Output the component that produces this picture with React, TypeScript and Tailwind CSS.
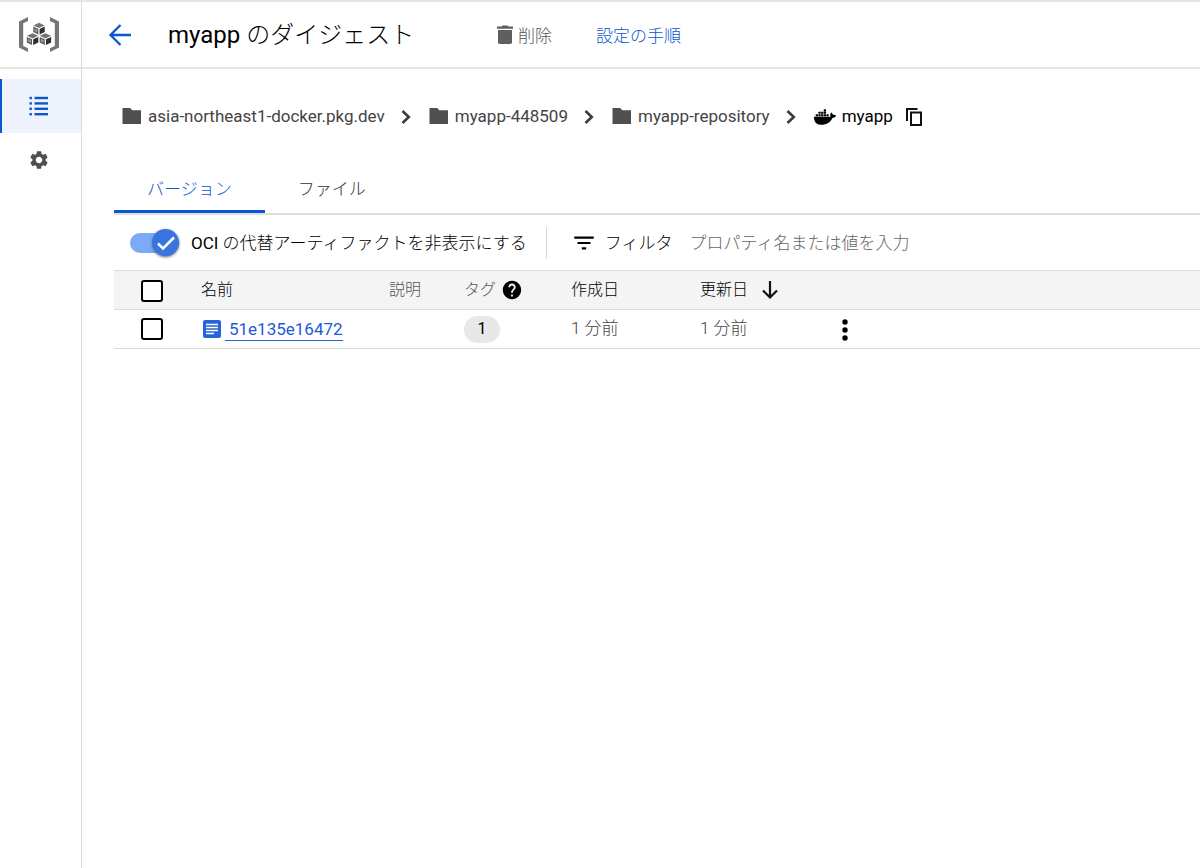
import { useState } from "react";
import type { ReactNode } from "react";
import { FaDocker } from "react-icons/fa";
import { MdFilterList, MdHelp, MdSettings } from "react-icons/md";

interface Version {
  digest: string;
  tags: number;
  created: string;
  updated: string;
}

const versions: Version[] = [
  { digest: "51e135e16472", tags: 1, created: "1 分前", updated: "1 分前" },
];

const parents = ["asia-northeast1-docker.pkg.dev", "myapp-448509", "myapp-repository"];

function Cube({ x, y }: { x: number; y: number }) {
  return (
    <g transform={`translate(${x} ${y})`}>
      <path d="M0 -5.8 5.6 -3.2 0 -.6 -5.6 -3.2Z" fill="#757575" />
      <path d="M-5.7 -2.1 -.6 .3V6L-5.7 3.4Z" fill="#5a5a5a" />
      <path d="M5.700 -2.100 .6 .3V6L5.700 3.400Z" fill="#2f2f2f" />
      <path d="M-4.600 -.2 -1.800 1.100V3.800L-4.600 2.400Z" fill="#9a9a9a" />
    </g>
  );
}

function RegistryLogo() {
  return (
    <svg width="42" height="36" viewBox="0 0 42 36" aria-hidden="true">
      <path d="M10 0V4L5.200 6.300V28.900L10 31.200V35L1 30.600V4.400Z" fill="#757575" />
      <path d="M32 0V4L36.800 6.300V28.900L32 31.200V35L41 30.600V4.400Z" fill="#757575" />
      <Cube x={21} y={11.6} />
      <Cube x={14.6} y={22} />
      <Cube x={27.4} y={22} />
    </svg>
  );
}

function BackIcon() {
  return (
    <svg width="24" height="24" viewBox="0 0 24 24" fill="none" stroke="#0b57d0" strokeWidth="2.300" aria-hidden="true">
      <path d="M23 12H3M12.500 2 2.500 12 12.500 22" />
    </svg>
  );
}

function ListIcon() {
  return (
    <svg width="20" height="20" viewBox="0 0 20 20" fill="#0b57d0" aria-hidden="true">
      {[0, 5.4, 10.8, 16.2].map((y) => (
        <g key={y}>
          <rect x="0.500" y={y + 0.8} width="2.400" height="2.400" />
          <rect x="5.500" y={y + 0.8} width="13.500" height="2.400" />
        </g>
      ))}
    </svg>
  );
}

function FolderIcon() {
  return (
    <svg width="20" height="20" viewBox="0 0 20 20" aria-hidden="true">
      <path d="M.5 1H8.200L10.200 3.200H19V17H.500Z" fill="#4f4f4f" />
    </svg>
  );
}

function ChevronIcon() {
  return (
    <svg width="10" height="14" viewBox="0 0 10 14" fill="none" stroke="#3c3c3c" strokeWidth="2.600" aria-hidden="true">
      <path d="M1.500 1 7.800 7 1.500 13" />
    </svg>
  );
}

function TrashIcon() {
  return (
    <svg width="18" height="20" viewBox="0 0 18 20" fill="#5f5f5f" aria-hidden="true">
      <path d="M1 1.500H5.500L6.500 .5H11.500L12.500 1.500H17V3.700H1Z" />
      <path d="M2 5H16V17.200A1.800 1.800 0 0 1 14.200 19H3.800A1.800 1.800 0 0 1 2 17.200Z" />
    </svg>
  );
}

function CopyIcon() {
  return (
    <svg width="18" height="20" viewBox="0 0 18 20" fill="none" stroke="#111" strokeWidth="2" aria-hidden="true">
      <path d="M2 14V2H12.500" />
      <path d="M6 5.500H16V18H6Z" />
    </svg>
  );
}

function DocumentIcon() {
  return (
    <svg width="20" height="20" viewBox="0 0 20 20" aria-hidden="true">
      <rect x="1" y="1" width="18" height="18" rx="2" fill="#2463d8" />
      <path d="M4 5.500H16M4 8.500H16M4 11.500H16M4 14.500H12" stroke="#fff" strokeWidth="1.500" />
    </svg>
  );
}

function SortIcon() {
  return (
    <svg width="18" height="20" viewBox="0 0 18 20" fill="none" stroke="#111" strokeWidth="2.200" aria-hidden="true">
      <path d="M9 1V17.500M2 10.500 9 17.500 16 10.500" />
    </svg>
  );
}

function MoreIcon() {
  return (
    <svg width="8" height="24" viewBox="0 0 8 24" fill="#000" aria-hidden="true">
      <circle cx="4" cy="4" r="2.700" />
      <circle cx="4" cy="12" r="2.700" />
      <circle cx="4" cy="20" r="2.700" />
    </svg>
  );
}

function Checkbox({ label, checked, onChange }: { label: string; checked: boolean; onChange: () => void }) {
  return (
    <input
      type="checkbox"
      aria-label={label}
      checked={checked}
      onChange={onChange}
      className="block size-[22px] appearance-none rounded-[3px] border-2 border-black bg-white checked:bg-[#2463d8]"
    />
  );
}

function Tab({ active, onClick, children }: { active: boolean; onClick: () => void; children: ReactNode }) {
  return (
    <button
      role="tab"
      aria-selected={active}
      onClick={onClick}
      className={`h-12 border-b-[3px] px-[33px] pt-1 text-[17px] font-light ${
        active ? "border-[#0b57d0] text-[#0b57d0]" : "border-transparent text-[#333]"
      }`}
    >
      {children}
    </button>
  );
}

export default function App() {
  const [tab, setTab] = useState("versions");
  const [hideOci, setHideOci] = useState(true);
  const [filter, setFilter] = useState("");
  const [selected, setSelected] = useState<string[]>([]);

  const toggle = (digest: string) =>
    setSelected(selected.includes(digest) ? selected.filter((d) => d !== digest) : [...selected, digest]);

  const allSelected = selected.length === versions.length;

  return (
    <div className="flex min-h-screen border-t-2 border-[#e6e6e6] bg-white font-[Roboto,'Noto_Sans_CJK_JP',sans-serif] text-[17px] text-black">
      {/* Side navigation */}
      <nav className="w-[82px] shrink-0 border-r border-[#dadada]">
        <div className="flex h-[67px] items-center border-b-2 border-[#e6e6e6] pl-[18px]">
          <RegistryLogo />
        </div>
        <a
          href="#repositories"
          aria-label="リポジトリ"
          className="mt-2.5 flex h-[54px] items-center border-l-2 border-[#0b57d0] bg-[#eef3fd] pl-[27px]"
        >
          <ListIcon />
        </a>
        <a href="#settings" aria-label="設定" className="flex h-[54px] items-center pl-7 text-[#4f4f4f]">
          <MdSettings size={22} />
        </a>
      </nav>

      <div className="min-w-0 flex-1">
        {/* Page header */}
        <header className="flex h-[67px] items-center border-b-2 border-[#e6e6e6] pl-[26px]">
          <button aria-label="戻る">
            <BackIcon />
          </button>
          <h1 className="ml-9 w-[328px] text-2xl">
            myapp <span className="font-light">のダイジェスト</span>
          </h1>
          <button className="flex items-center gap-1 font-light text-[#555]">
            <TrashIcon />
            <span className="pt-1">削除</span>
          </button>
          <a href="#setup" className="ml-11 pt-1 font-light text-[#0b57d0]">
            設定の手順
          </a>
        </header>

        <main className="pl-8">
          {/* Breadcrumb */}
          <div className="flex h-24 items-center pl-2">
            {parents.map((name) => (
              <div key={name} className="flex items-center">
                <a href={`#${name}`} className="flex items-center gap-1.5 text-[#444]">
                  <FolderIcon />
                  {name}
                </a>
                <span className="mr-[18px] ml-4">
                  <ChevronIcon />
                </span>
              </div>
            ))}
            <span className="flex items-center gap-1.5">
              <FaDocker size={22} />
              myapp
            </span>
            <button aria-label="コピー" className="ml-3">
              <CopyIcon />
            </button>
          </div>

          {/* Tabs */}
          <div role="tablist" className="flex border-b-2 border-[#dedede]">
            <Tab active={tab === "versions"} onClick={() => setTab("versions")}>
              バージョン
            </Tab>
            <Tab active={tab === "files"} onClick={() => setTab("files")}>
              ファイル
            </Tab>
          </div>

          {/* Toolbar */}
          <div className="flex h-[55px] items-center pl-4">
            <label className="flex items-center gap-3">
              <input
                type="checkbox"
                checked={hideOci}
                onChange={(e) => setHideOci(e.target.checked)}
                className="peer sr-only"
              />
              <span className="flex h-5 w-[49px] items-center justify-start rounded-full bg-gray-300 peer-checked:justify-end peer-checked:bg-[#7baaf7]">
                <span className="flex size-[27px] shrink-0 items-center justify-center rounded-full bg-[#3974e0] shadow-sm shadow-gray-500">
                  <svg width="20" height="18" viewBox="0 0 20 18" fill="none" stroke="#fff" strokeWidth="2.600" aria-hidden="true">
                    <path d="M2 9.500 7 14.500 18 3.500" />
                  </svg>
                </span>
              </span>
              <span className="pt-0.5">
                OCI <span className="font-light">の代替アーティファクトを非表示にする</span>
              </span>
            </label>
            <div className="ml-[19px] h-8 w-px bg-[#d4d4d4]" />
            <label htmlFor="filter" className="ml-6 flex items-center gap-2 font-light">
              <MdFilterList size={26} />
              <span className="pt-0.5">フィルタ</span>
            </label>
            <input
              id="filter"
              type="text"
              value={filter}
              onChange={(e) => setFilter(e.target.value)}
              placeholder="プロパティ名または値を入力"
              className="ml-[17px] min-w-0 flex-1 pt-0.5 font-light outline-none placeholder:text-[#666]"
            />
          </div>

          {/* Versions */}
          <table className="w-full table-fixed text-left">
            <colgroup>
              <col className="w-[87px]" />
              <col className="w-[188px]" />
              <col className="w-[75px]" />
              <col className="w-[107px]" />
              <col className="w-[129px]" />
              <col className="w-[139px]" />
              <col />
            </colgroup>
            <thead className="text-base">
              <tr className="h-[39px] border-y border-[#dcdcdc] bg-[#f4f4f4]">
                <th className="pt-0.5 pl-[27px]">
                  <Checkbox
                    label="すべて選択"
                    checked={allSelected}
                    onChange={() => setSelected(allSelected ? [] : versions.map((v) => v.digest))}
                  />
                </th>
                <th className="font-light">名前</th>
                <th className="font-light text-[#555]">説明</th>
                <th className="font-light text-[#555]">
                  <span className="flex items-center gap-[5px]">
                    タグ
                    <MdHelp size={22} className="text-black" />
                  </span>
                </th>
                <th className="font-light">作成日</th>
                <th className="font-light">
                  <button className="flex items-center gap-[13px]">
                    更新日
                    <SortIcon />
                  </button>
                </th>
                <th />
              </tr>
            </thead>
            <tbody>
              {versions.map((version) => (
                <tr key={version.digest} className="h-[39px] border-b border-[#dcdcdc]">
                  <td className="pl-[27px]">
                    <Checkbox
                      label={version.digest}
                      checked={selected.includes(version.digest)}
                      onChange={() => toggle(version.digest)}
                    />
                  </td>
                  <td>
                    <span className="flex items-center gap-[3px] pl-px">
                      <DocumentIcon />
                      <a href={`#${version.digest}`} className="border-b border-[#2463d8] pl-1 leading-[22px] text-[#1a5bd7]">
                        {version.digest}
                      </a>
                    </span>
                  </td>
                  <td />
                  <td>
                    <span className="flex h-[27px] w-9 items-center justify-center rounded-full bg-[#e8e8e8] text-base">
                      {version.tags}
                    </span>
                  </td>
                  <td className="font-light text-[#444]">{version.created}</td>
                  <td className="font-light text-[#444]">{version.updated}</td>
                  <td className="pt-0.5">
                    <button aria-label="その他の操作" className="flex pl-0.5">
                      <MoreIcon />
                    </button>
                  </td>
                </tr>
              ))}
            </tbody>
          </table>
        </main>
      </div>
    </div>
  );
}
